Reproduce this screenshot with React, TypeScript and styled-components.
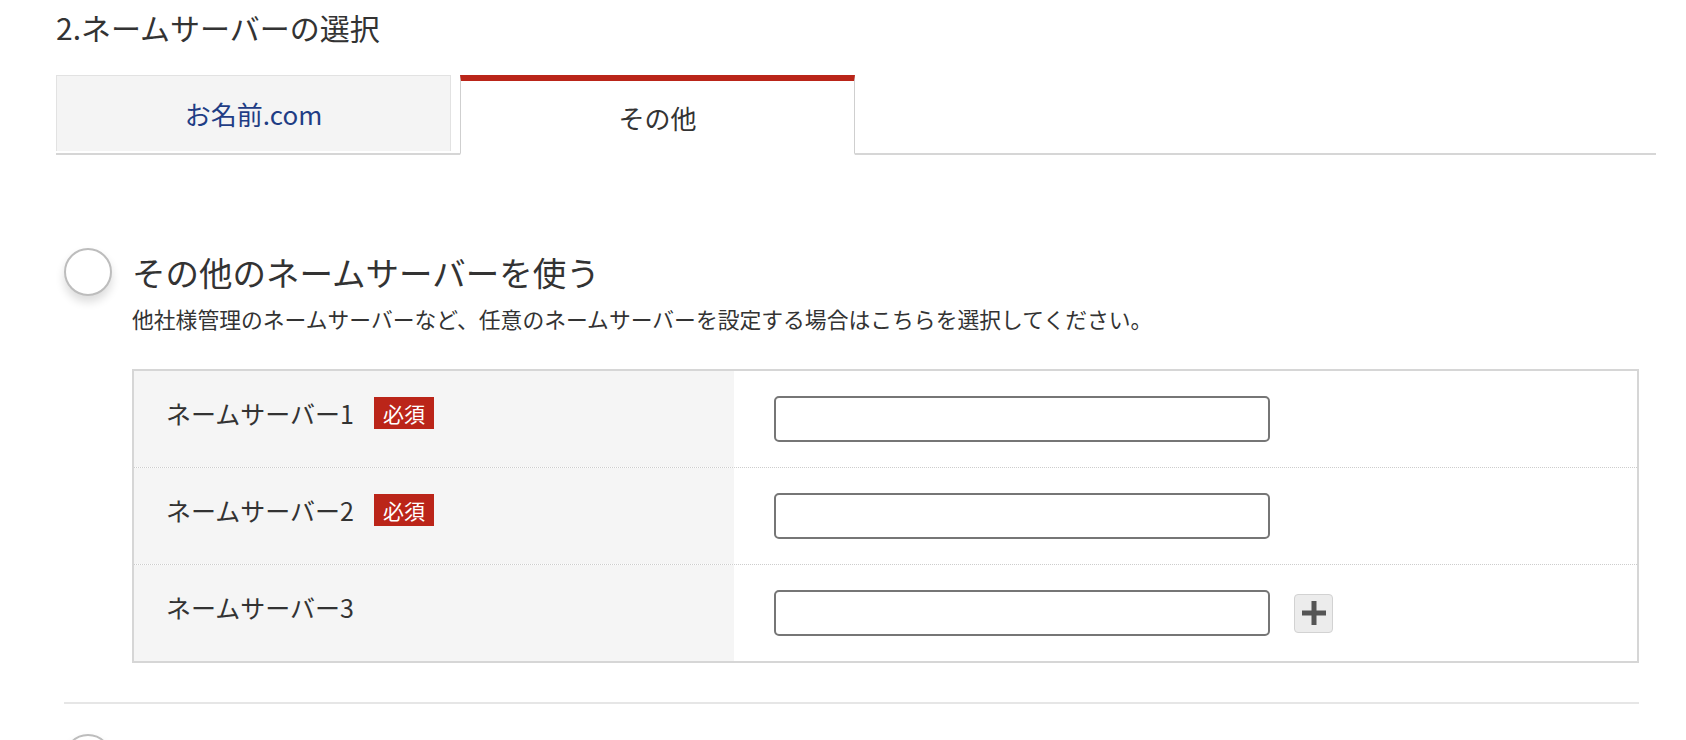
import React from 'react';
import styled, { createGlobalStyle } from 'styled-components';

const GlobalStyle = createGlobalStyle`
  body {
    margin: 0;
    background: #fff;
    font-family: "Noto Sans CJK JP", "Noto Sans", sans-serif;
    color: #333;
  }
`;

const rows = [
  { label: 'ネームサーバー1', required: true, addable: false },
  { label: 'ネームサーバー2', required: true, addable: false },
  { label: 'ネームサーバー3', required: false, addable: true },
];

const App: React.FC = () => {
  return (
    <>
      <GlobalStyle />
      <Page>
        <Title>2.ネームサーバーの選択</Title>
        <TabBar>
          <Tab>お名前.com</Tab>
          <Tab active>その他</Tab>
        </TabBar>

        <Section>
          <OptionHeader>
            <Radio />
            <OptionTitle>その他のネームサーバーを使う</OptionTitle>
          </OptionHeader>
          <Description>
            他社様管理のネームサーバーなど、任意のネームサーバーを設定する場合はこちらを選択してください。
          </Description>

          <Table>
            {rows.map((row, i) => (
              <Row key={row.label} first={i === 0}>
                <LabelCell>
                  <LabelLine>
                    <LabelText>{row.label}</LabelText>
                    {row.required && <Badge>必須</Badge>}
                  </LabelLine>
                </LabelCell>
                <ValueCell>
                  <TextInput type="text" />
                  {row.addable && (
                    <AddButton type="button" aria-label="追加">
                      <svg width="24" height="24" viewBox="0 0 24 24">
                        <rect x="0" y="9.5" width="24" height="5" fill="#555" />
                        <rect x="9.5" y="0" width="5" height="24" fill="#555" />
                      </svg>
                    </AddButton>
                  )}
                </ValueCell>
              </Row>
            ))}
          </Table>

          <Divider />

          <OptionHeader>
            <Radio />
          </OptionHeader>
        </Section>
      </Page>
    </>
  );
};

// Styled Components
const Page = styled.div`
  width: 1600px;
  padding-left: 56px;
`;

const Title = styled.h2`
  margin: 7px 0 0;
  font-size: 30px;
  line-height: 40px;
  font-weight: normal;
  color: #333;
`;

const TabBar = styled.div`
  display: flex;
  gap: 9px;
  margin-top: 28px;
  border-bottom: 2px solid #d6d6d6;
`;

const Tab = styled.div<{ active?: boolean }>`
  width: 393px;
  height: ${(p) => (p.active ? '72px' : '75px')};
  margin-bottom: ${(p) => (p.active ? '-2px' : '0')};
  box-sizing: content-box;
  display: flex;
  align-items: center;
  justify-content: center;
  font-size: 26px;
  color: ${(p) => (p.active ? '#333' : '#1f3d85')};
  background: ${(p) => (p.active ? '#fff' : '#f4f4f4')};
  border: 1px solid ${(p) => (p.active ? '#cfcfcf' : '#e2e2e2')};
  border-top: ${(p) => (p.active ? '6px solid #ba2519' : '1px solid #e2e2e2')};
  border-bottom: ${(p) => (p.active ? '2px solid #fff' : 'none')};
`;

const Section = styled.div`
  margin: 93px 17px 0 8px;
`;

const OptionHeader = styled.div`
  display: flex;
  align-items: center;
  gap: 20px;
`;

const Radio = styled.span`
  flex: none;
  width: 44px;
  height: 44px;
  border-radius: 50%;
  border: 2px solid #bdbdbd;
  background: #fff;
  box-shadow: 0 6px 10px rgba(0, 0, 0, 0.14);
`;

const OptionTitle = styled.div`
  font-size: 33.5px;
  line-height: 48px;
  color: #333;
`;

const Description = styled.p`
  margin: 7px 0 0 68px;
  font-size: 21.8px;
  line-height: 32px;
  color: #333;
`;

const Table = styled.div`
  margin: 34px 0 0 68px;
  border: 2px solid #d6d6d6;
`;

const Row = styled.div<{ first?: boolean }>`
  display: grid;
  grid-template-columns: 600px 1fr;
  border-top: ${(p) => (p.first ? 'none' : '1px dotted #cdcdcd')};
`;

const LabelCell = styled.div`
  padding: 24px 32px;
  background: #f5f5f5;
`;

const LabelLine = styled.div`
  display: flex;
  align-items: center;
  gap: 20px;
  height: 36px;
`;

const LabelText = styled.span`
  font-size: 25px;
  color: #333;
`;

const Badge = styled.span`
  display: inline-flex;
  align-items: center;
  justify-content: center;
  width: 60px;
  height: 32px;
  background: #bb2519;
  color: #fff;
  font-size: 21px;
`;

const ValueCell = styled.div`
  display: flex;
  align-items: center;
  gap: 24px;
  padding: 25px 40px 25px;
`;

const TextInput = styled.input`
  width: 496px;
  height: 46px;
  box-sizing: border-box;
  border: 2px solid #767676;
  border-radius: 5px;
  background: #fff;
  font-size: 20px;
  padding: 0 10px;
`;

const AddButton = styled.button`
  display: flex;
  align-items: center;
  justify-content: center;
  width: 39px;
  height: 39px;
  padding: 0;
  background: #ececec;
  border: 1.5px solid #d2d2d2;
  border-radius: 4px;
  cursor: pointer;
`;

const Divider = styled.hr`
  margin: 39px 0 30px;
  border: none;
  border-top: 2px solid #e6e6e6;
`;

export default App;
